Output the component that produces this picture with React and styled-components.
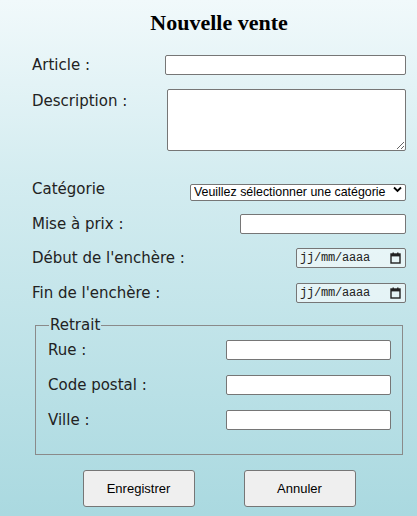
import styled, { createGlobalStyle } from "styled-components";

const GlobalStyle = createGlobalStyle`
  html, body {
    margin: 0;
    padding: 0;
  }
  body {
    min-height: 516px;
    background: linear-gradient(180deg, #f1f9fb 0%, #d3ecf0 35%, #aad9e0 100%);
    font-family: "DejaVu Sans", Verdana, sans-serif;
    color: #222;
  }
`;

const Page = styled.div`
  width: 374px;
  margin-left: 32px;
  padding-top: 10px;
  padding-bottom: 8px;
`;

const Title = styled.h1`
  margin: 0;
  text-align: center;
  font-family: "Liberation Serif", "Times New Roman", serif;
  font-size: 22px;
  line-height: 26px;
  font-weight: bold;
  color: #000;
`;

const Row = styled.div`
  display: flex;
  justify-content: space-between;
  align-items: ${(p) => (p.$top ? "flex-start" : "center")};
  margin-top: ${(p) => p.$mt}px;
`;

const Label = styled.label`
  font-size: 15px;
  line-height: 18px;
  padding-top: ${(p) => (p.$top ? 3 : 0)}px;
  color: #222;
`;

const TextInput = styled.input`
  box-sizing: border-box;
  width: ${(p) => p.$w}px;
  height: 20px;
  border: 1px solid #767676;
  border-radius: 2px;
  background: #fff;
  padding: 1px 3px;
  font-size: 13px;
  outline: none;
`;

const TextArea = styled.textarea`
  box-sizing: border-box;
  width: 239px;
  height: 62px;
  border: 1px solid #767676;
  border-radius: 2px;
  background: #fff;
  padding: 2px;
  margin: 0;
  outline: none;
`;

const SelectWrap = styled.div`
  position: relative;
  width: 216px;
  height: 17px;
`;

const Select = styled.select`
  box-sizing: border-box;
  width: 100%;
  height: 17px;
  appearance: none;
  border: 1px solid #767676;
  border-radius: 2px;
  background: #fff;
  padding: 0 0 0 3px;
  font-family: "Liberation Sans", Arial, sans-serif;
  font-size: 12.4px;
  line-height: 15px;
  color: #000;
  outline: none;
`;

const Chevron = styled.svg`
  position: absolute;
  right: 4px;
  top: 5px;
  pointer-events: none;
`;

const DateBox = styled.div`
  box-sizing: border-box;
  width: 110px;
  height: 20px;
  display: flex;
  align-items: center;
  justify-content: space-between;
  padding: 0 4px 0 3px;
  border: 1px solid #767676;
  border-radius: 2px;
  background: rgba(255, 255, 255, 0.55);
  font-family: "Liberation Mono", "Courier New", monospace;
  font-size: 12px;
  color: #222;
`;

const DateText = styled.span`
  letter-spacing: -0.2px;
  white-space: pre;
`;

const Fieldset = styled.fieldset`
  box-sizing: border-box;
  width: 368px;
  margin: 13px 0 0 3px;
  padding: 0 11px 24px 12px;
  border: 1px solid #8a8a8a;
`;

const Legend = styled.legend`
  padding: 0 1px;
  margin-left: 1px;
  font-size: 15px;
  line-height: 18px;
  color: #222;
`;

const Buttons = styled.div`
  display: flex;
  justify-content: center;
  gap: 49px;
  margin-top: 15px;
`;

const Button = styled.button`
  box-sizing: border-box;
  width: 112px;
  height: 37px;
  border: 1px solid #767676;
  border-radius: 3px;
  background: #efefef;
  font-family: "Liberation Sans", Arial, sans-serif;
  font-size: 13px;
  color: #000;
  cursor: pointer;
`;

function CalendarIcon() {
  return (
    <svg width="11" height="12" viewBox="0 0 11 12">
      <rect x="1" y="2" width="9" height="9" fill="none" stroke="#222" strokeWidth="1.4" />
      <rect x="1" y="2" width="9" height="2.4" fill="#222" />
      <rect x="2.5" y="0.5" width="1.4" height="2" fill="#222" />
      <rect x="7.1" y="0.5" width="1.4" height="2" fill="#222" />
    </svg>
  );
}

function DateField() {
  return (
    <DateBox>
      <DateText>jj/mm/aaaa</DateText>
      <CalendarIcon />
    </DateBox>
  );
}

function App() {
  return (
    <>
      <GlobalStyle />
      <Page>
        <Title>Nouvelle vente</Title>

        <Row $mt={19}>
          <Label>Article :</Label>
          <TextInput $w={241} />
        </Row>

        <Row $mt={14} $top>
          <Label $top>Description :</Label>
          <TextArea />
        </Row>

        <Row $mt={29}>
          <Label>Catégorie</Label>
          <SelectWrap>
            <Select defaultValue="">
              <option value="">Veuillez sélectionner une catégorie</option>
            </Select>
            <Chevron width="9" height="7" viewBox="0 0 9 7">
              <path d="M1 1.5 L4.5 5 L8 1.5" fill="none" stroke="#000" strokeWidth="1.8" />
            </Chevron>
          </SelectWrap>
        </Row>

        <Row $mt={16}>
          <Label>Mise à prix :</Label>
          <TextInput $w={166} />
        </Row>

        <Row $mt={14}>
          <Label>Début de l'enchère :</Label>
          <DateField />
        </Row>

        <Row $mt={15}>
          <Label>Fin de l'enchère :</Label>
          <DateField />
        </Row>

        <Fieldset>
          <Legend>Retrait</Legend>
          <Row $mt={6}>
            <Label>Rue :</Label>
            <TextInput $w={165} />
          </Row>
          <Row $mt={15}>
            <Label>Code postal :</Label>
            <TextInput $w={165} />
          </Row>
          <Row $mt={15}>
            <Label>Ville :</Label>
            <TextInput $w={165} />
          </Row>
        </Fieldset>

        <Buttons>
          <Button>Enregistrer</Button>
          <Button>Annuler</Button>
        </Buttons>
      </Page>
    </>
  );
}

export default App;
